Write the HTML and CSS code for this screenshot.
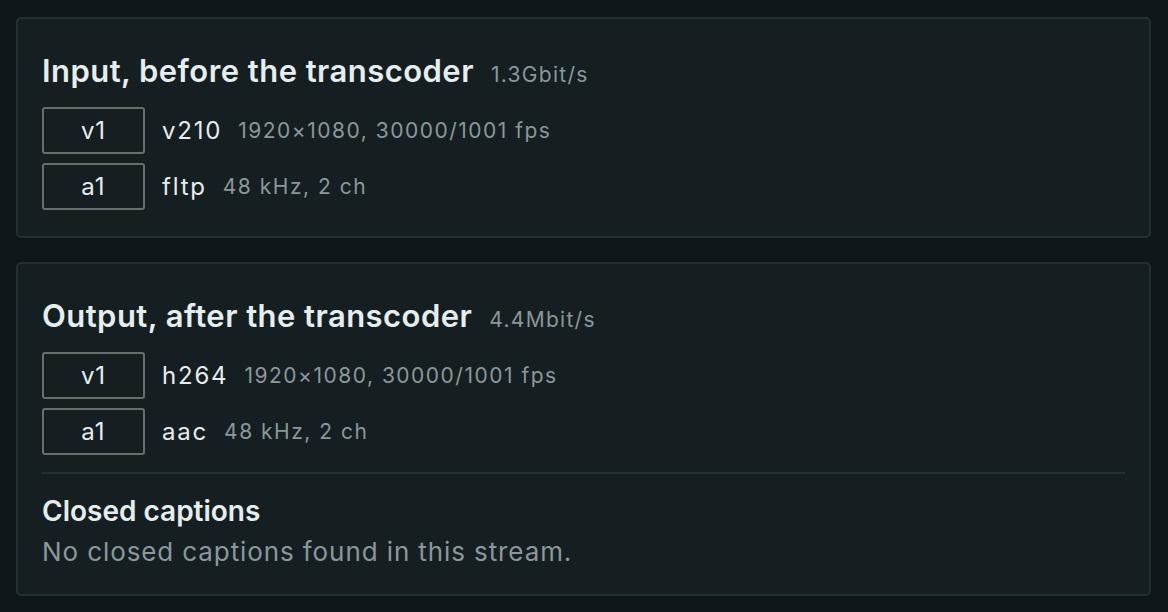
FILE: index.html
```html
<!DOCTYPE html>
<html>
<head>
  <title>Stream info</title>
  <link rel="stylesheet" href="styles.css">
</head>
<body>

  <div class="card">
    <h2 class="card-title">Input, before the transcoder <span class="rate">1.3Gbit/s</span></h2>
    <div class="tracks">
      <div class="track">
        <div class="track-id">v1</div>
        <div class="codec">v210</div>
        <div class="details">1920×1080, 30000/1001 fps</div>
      </div>
      <div class="track">
        <div class="track-id">a1</div>
        <div class="codec">fltp</div>
        <div class="details">48 kHz, 2 ch</div>
      </div>
    </div>
  </div>

  <div class="card">
    <h2 class="card-title">Output, after the transcoder <span class="rate">4.4Mbit/s</span></h2>
    <div class="tracks">
      <div class="track">
        <div class="track-id">v1</div>
        <div class="codec">h264</div>
        <div class="details">1920×1080, 30000/1001 fps</div>
      </div>
      <div class="track">
        <div class="track-id">a1</div>
        <div class="codec">aac</div>
        <div class="details">48 kHz, 2 ch</div>
      </div>
    </div>
    <div class="divider"></div>
    <h3 class="sub-title">Closed captions</h3>
    <p class="empty">No closed captions found in this stream.</p>
  </div>

</body>
</html>
```

FILE: styles.css
```css
body {
  margin: 0;
  padding: 17px 17px 0 16px;
  background: #0f1619;
  font-family: Inter, "Noto Sans", sans-serif;
  color: #e6eded;
}

.card {
  background: #151f21;
  border: 2px solid #223033;
  border-radius: 5px;
  padding: 34px 24px 26px 24px;
  margin-bottom: 24px;
}

.card-title {
  margin: 0 0 14px 0;
  font-size: 31px;
  font-weight: 600;
  line-height: 36px;
  letter-spacing: 0.45px;
  display: flex;
  align-items: baseline;
  gap: 17px;
}

.rate {
  font-size: 21px;
  font-weight: 400;
  letter-spacing: 1.3px;
  color: #8a9899;
}

.tracks {
  display: flex;
  flex-direction: column;
  gap: 9px;
}

.track {
  display: flex;
  align-items: center;
  gap: 16px;
}

.track-id {
  width: 99px;
  height: 43px;
  border: 2px solid #6a6d6e;
  border-radius: 3px;
  display: flex;
  align-items: center;
  justify-content: center;
  font-size: 24px;
  letter-spacing: 1px;
}

.codec {
  margin-left: 1px;
  font-size: 24px;
  letter-spacing: 1.8px;
}

.details {
  font-size: 21px;
  letter-spacing: 1.5px;
  color: #8a9899;
}

.divider {
  height: 2px;
  background: #223033;
  margin: 17px 0 22px 0;
}

.sub-title {
  margin: 0;
  font-size: 28px;
  font-weight: 600;
  line-height: 30px;
}

.empty {
  margin: 10px 0 0 0;
  font-size: 26px;
  line-height: 32px;
  letter-spacing: 0.9px;
  color: #8a9899;
}
```
